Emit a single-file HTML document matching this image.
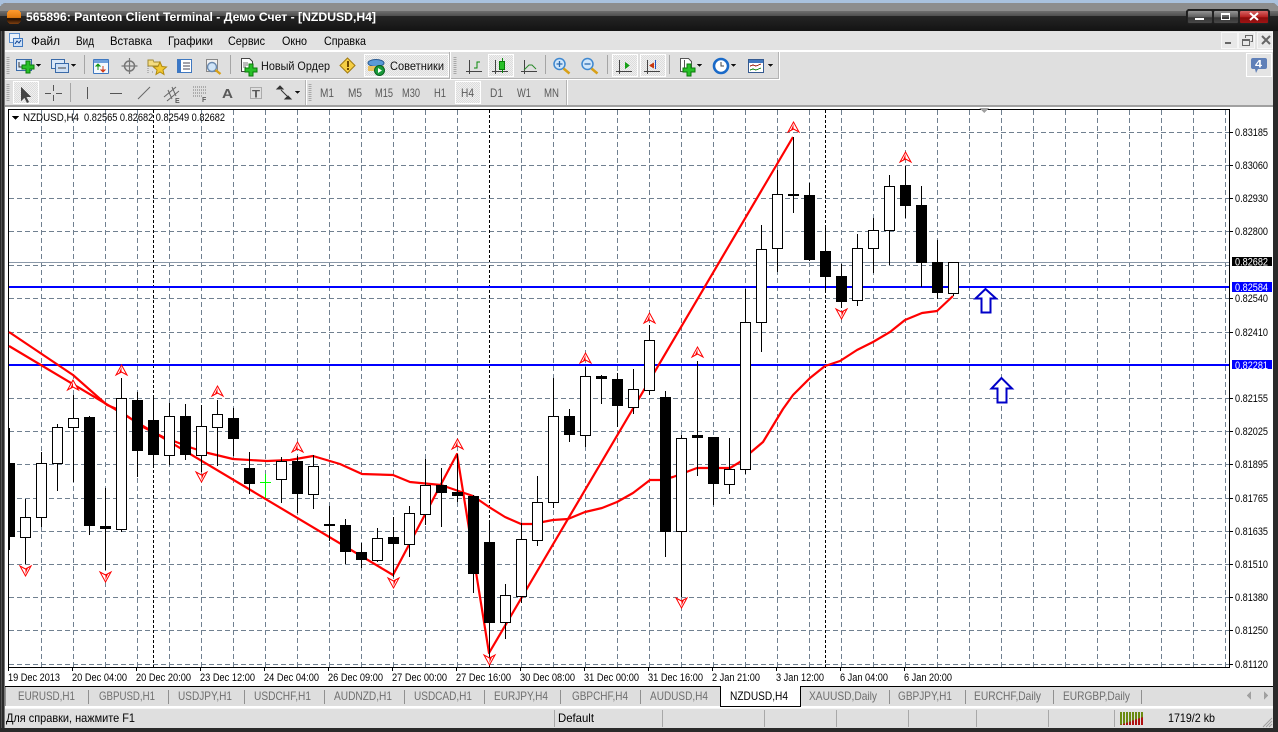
<!DOCTYPE html>
<html><head><meta charset="utf-8"><title>Panteon Client Terminal</title>
<style>
html,body{margin:0;padding:0;background:#a9c1dd;width:1278px;height:732px;overflow:hidden}
svg{display:block}
text{font-family:"Liberation Sans","Noto Sans CJK SC",sans-serif;font-size:12px}
.m{fill:#000}
.a{font-size:11px;fill:#000}
.d{font-size:11px;fill:#000}
.t{fill:#6e6e6e}
.f{fill:#5a5a5a}
</style></head><body>
<svg width="1278" height="732" viewBox="0 0 1278 732" xmlns="http://www.w3.org/2000/svg" shape-rendering="crispEdges">
<defs>
<linearGradient id="g1" x1="0" y1="0" x2="0" y2="1"><stop offset="0" stop-color="#8d8d8d"/><stop offset="1" stop-color="#4f4f4f"/></linearGradient>
<linearGradient id="g2" x1="0" y1="0" x2="0" y2="1"><stop offset="0" stop-color="#252525"/><stop offset="1" stop-color="#131313"/></linearGradient>
<linearGradient id="g3" x1="0" y1="0" x2="0" y2="1"><stop offset="0" stop-color="#ff9a2e"/><stop offset=".55" stop-color="#e07a10"/><stop offset=".6" stop-color="#1a0a00"/><stop offset="1" stop-color="#804010"/></linearGradient>
<linearGradient id="g4" x1="0" y1="0" x2="0" y2="1"><stop offset="0" stop-color="#9a9a9a"/><stop offset=".5" stop-color="#5e5e5e"/><stop offset=".55" stop-color="#353535"/><stop offset="1" stop-color="#4a4a4a"/></linearGradient>
<linearGradient id="g5" x1="0" y1="0" x2="0" y2="1"><stop offset="0" stop-color="#d86a6a"/><stop offset=".5" stop-color="#b82020"/><stop offset=".55" stop-color="#8a0c0c"/><stop offset="1" stop-color="#a01414"/></linearGradient>
<pattern id="h" width="2" height="2" patternUnits="userSpaceOnUse"><rect width="2" height="2" fill="#f0f0f0"/><rect width="1" height="1" fill="#dcdcdc"/><rect x="1" y="1" width="1" height="1" fill="#dcdcdc"/></pattern>
<g id="u" shape-rendering="geometricPrecision"><path d="M0-5L5.500 5 0 2-5.500 5Z" fill="#fff" stroke="#f00" stroke-width="1"/><path d="M0-3L-2.500 3 0 2z" fill="#f00"/></g>
<g id="v" shape-rendering="geometricPrecision"><path d="M0 5L5.500-5 0-2-5.500-5Z" fill="#fff" stroke="#f00" stroke-width="1"/><path d="M0 3L2.500-3 0-2z" fill="#f00"/></g>
<g id="plus"><path d="M-2-6h4v4h4v4h-4v4h-4v-4h-4v-4h4z" fill="#28c028" stroke="#0a7a0a" stroke-width="1"/></g>
</defs>

<!-- window -->
<rect width="1278" height="732" fill="#a9c1dd"/>
<rect y="3" width="1278" height="729" rx="6" fill="#262626"/>
<rect x="0" y="6" width="1278" height="10" fill="url(#g1)"/>
<path d="M0 9a6 6 0 0 1 6-6H1272a6 6 0 0 1 6 6v2H0z" fill="#8d8d8d" shape-rendering="geometricPrecision"/>
<rect y="16" width="1278" height="15" fill="url(#g2)"/>
<rect x="7" y="10" width="14" height="14" rx="4" fill="url(#g3)"/>
<text x="26" y="21" style="font-size:12px;font-weight:bold" fill="#fff" textLength="350" lengthAdjust="spacingAndGlyphs">565896: Panteon Client Terminal - Демо Счет - [NZDUSD,H4]</text>

<!-- caption buttons -->
<rect x="1186" y="9" width="84" height="16" rx="3" fill="#1c1c1c"/>
<rect x="1187.500" y="10.500" width="25" height="13" rx="2" fill="url(#g4)" stroke="#222"/>
<rect x="1213.500" y="10.500" width="25" height="13" rx="2" fill="url(#g4)" stroke="#222"/>
<rect x="1239.500" y="10.500" width="29" height="13" rx="2" fill="url(#g5)" stroke="#222"/>
<rect x="1195" y="18" width="9" height="2" fill="#fff"/>
<rect x="1221.500" y="13.500" width="8" height="6" fill="none" stroke="#fff" stroke-width="1"/><rect x="1221" y="13" width="9" height="2" fill="#fff"/>
<path d="M1250 13l8 7M1258 13l-8 7" stroke="#fff" stroke-width="2" shape-rendering="geometricPrecision"/>

<!-- left/right frame and client -->
<rect x="0" y="31" width="5" height="697" fill="#2a2a2a"/>
<rect x="1273" y="31" width="5" height="697" fill="#2a2a2a"/>
<rect x="1" y="31" width="1" height="697" fill="#555"/>
<rect x="4" y="31" width="1" height="697" fill="#777"/>
<rect x="5" y="31" width="1268" height="697" fill="#dfdfdf"/>

<!-- menu -->
<rect x="5" y="31" width="1268" height="19" fill="#e2e2e2"/>
<rect x="5" y="50" width="1268" height="2" fill="#fff"/>
<rect x="9.500" y="33.500" width="10" height="9" fill="#e8f0fa" stroke="#5a8fd0"/>
<rect x="13.500" y="38.500" width="9" height="8" fill="#cfe0f5" stroke="#3f78c0"/>
<path d="M15 44l2-3 2 2 2-3" stroke="#2a5aa0" fill="none"/>
<text class="m" x="31" y="45" textLength="29" lengthAdjust="spacingAndGlyphs">Файл</text>
<text class="m" x="76" y="45" textLength="18" lengthAdjust="spacingAndGlyphs">Вид</text>
<text class="m" x="110" y="45" textLength="42" lengthAdjust="spacingAndGlyphs">Вставка</text>
<text class="m" x="168" y="45" textLength="45" lengthAdjust="spacingAndGlyphs">Графики</text>
<text class="m" x="228" y="45" textLength="37" lengthAdjust="spacingAndGlyphs">Сервис</text>
<text class="m" x="282" y="45" textLength="25" lengthAdjust="spacingAndGlyphs">Окно</text>
<text class="m" x="324" y="45" textLength="42" lengthAdjust="spacingAndGlyphs">Справка</text>
<!-- mdi buttons -->
<rect x="1221.500" y="32.500" width="16" height="16" fill="#e8e8e8" stroke="#f6f6f6"/>
<rect x="1238.500" y="32.500" width="16" height="16" fill="#e8e8e8" stroke="#f6f6f6"/>
<rect x="1257.500" y="32.500" width="15" height="16" fill="#e8e8e8" stroke="#f6f6f6"/>
<rect x="1225" y="42" width="6" height="2" fill="#666"/>
<rect x="1242.500" y="39.500" width="7" height="6" fill="none" stroke="#666"/><rect x="1242" y="39" width="8" height="2" fill="#666"/><path d="M1245.500 38v-2.500h7v6h-2" fill="none" stroke="#666"/>
<path d="M1262 36l8 8M1270 36l-8 8" stroke="#666" stroke-width="2" shape-rendering="geometricPrecision"/>

<!-- toolbar frames -->
<rect x="5" y="78" width="774" height="1" fill="#b4b4b4"/>
<rect x="5" y="79" width="775" height="1" fill="#fff"/>
<rect x="778" y="52" width="1" height="27" fill="#b4b4b4"/>
<rect x="779" y="52" width="1" height="28" fill="#fff"/>
<rect x="449" y="52" width="1" height="27" fill="#b4b4b4"/><rect x="450" y="52" width="1" height="27" fill="#fff"/>
<rect x="566" y="80" width="1" height="26" fill="#b4b4b4"/><rect x="567" y="80" width="1" height="26" fill="#fff"/>
<rect x="305" y="80" width="1" height="26" fill="#b4b4b4"/><rect x="306" y="80" width="1" height="26" fill="#fff"/>
<rect x="5" y="105" width="1268" height="2" fill="#a0a0a0"/>
<path d="M8 57v18M455 57v18M8 84v18M310 84v18" stroke="#a8a8a8" stroke-width="3" stroke-dasharray="1 1" fill="none"/>
<path d="M84.500 55v19M230.500 55v19M545.500 55v19M607.500 55v19M669.500 55v19M70.500 83v19" stroke="#a5a5a5" fill="none"/>

<!-- hatched buttons -->
<rect x="364.500" y="54.500" width="84" height="22" fill="url(#h)" stroke="#fff"/>
<rect x="488.500" y="54.500" width="25" height="22" fill="url(#h)" stroke="#fff"/>
<rect x="612.500" y="54.500" width="25" height="22" fill="url(#h)" stroke="#fff"/>
<rect x="640.500" y="54.500" width="25" height="22" fill="url(#h)" stroke="#fff"/>
<rect x="13.500" y="81.500" width="25" height="22" fill="url(#h)" stroke="#fff"/>
<rect x="455.500" y="81.500" width="25" height="22" fill="url(#h)" stroke="#fff"/>
<rect x="1246.500" y="53.500" width="25" height="23" fill="#e4e4e4" stroke="#fff"/>

<!-- row 1 icons -->
<rect x="16.500" y="59.500" width="15" height="11" fill="#dbe8f8" stroke="#3a6aa8"/><path d="M19 62v5h6" stroke="#333" fill="none"/>
<use href="#plus" x="28" y="67"/>
<path d="M36 64h5l-2.500 3z" fill="#111"/>
<rect x="51.500" y="59.500" width="13" height="9" fill="#dbe8f8" stroke="#3a6aa8"/><rect x="55.500" y="63.500" width="13" height="9" fill="#cfe0f5" stroke="#3a6aa8"/><path d="M58 68h8" stroke="#444"/>
<path d="M71 64h5l-2.500 3z" fill="#111"/>
<rect x="93.500" y="59.500" width="15" height="14" rx="1" fill="#f4f8fd" stroke="#3f78c0"/><rect x="94" y="60" width="14" height="3" fill="#6ea0dc"/><path d="M98 70v-4m-2 0h4l-2-2z" stroke="#1a9a1a" fill="#1a9a1a"/><path d="M103 66v4m-2 0h4l-2 2z" stroke="#d04020" fill="#d04020"/>
<g shape-rendering="geometricPrecision" fill="none" stroke="#777"><circle cx="129.500" cy="66" r="5" stroke-width="1.500"/><path d="M129.500 58v16M121.500 66h16" stroke-width="1.200"/></g>
<path d="M148 60h5l1 2h6v4h-12z" fill="#f4dc80" stroke="#a08830"/><path d="M148 66v7M152 72h1" stroke="#888" stroke-dasharray="1 1"/>
<path d="M160 62l2 4.500 4.500.5-3.500 3 1 4.500-4-2.500-4 2.500 1-4.500-3.500-3 4.500-.5z" fill="#f2c832" stroke="#b08a10" shape-rendering="geometricPrecision"/>
<rect x="177.500" y="59.500" width="14" height="13" fill="#fff" stroke="#3f78c0"/><rect x="178" y="60" width="3" height="12" fill="#3a78c8"/><path d="M183 63h7M183 66h7M183 69h7" stroke="#445"/>
<rect x="206.500" y="59.500" width="11" height="12" fill="#f0f0f0" stroke="#888"/><g shape-rendering="geometricPrecision"><circle cx="212" cy="67" r="4.500" fill="#cfe4f8" stroke="#6a8ab0" stroke-width="1.400"/><path d="M215.500 70l5 4" stroke="#d8a018" stroke-width="2.400"/></g>
<path d="M241.500 58.500h8l3 3v10h-11z" fill="#fff" stroke="#444"/><path d="M243 63h5M243 65h5M243 67h3" stroke="#777"/><use href="#plus" x="251" y="70"/>
<text class="m" x="261" y="70" textLength="69" lengthAdjust="spacingAndGlyphs" style="fill:#111">Новый Ордер</text>
<path d="M347.500 58l7.500 7.500-7.500 7.500-7.500-7.500z" fill="#f6cf44" stroke="#a07a10" shape-rendering="geometricPrecision"/><rect x="347" y="61" width="2" height="6" fill="#704a00"/><rect x="347" y="68" width="2" height="2" fill="#704a00"/>
<g shape-rendering="geometricPrecision"><ellipse cx="376" cy="63" rx="8" ry="3.500" fill="#5a9ad8" stroke="#2a5a90"/><path d="M368 66h16v5h-16z" fill="#e8c060"/><circle cx="379.500" cy="70.500" r="5" fill="#1a9a3a" stroke="#0a6020"/><path d="M378 68v5l4-2.500z" fill="#fff"/></g>
<text class="m" x="390" y="70" textLength="54" lengthAdjust="spacingAndGlyphs" style="fill:#111">Советники</text>
<!-- chart toolbar icons -->
<g fill="none" stroke="#444"><path d="M469.500 60v14M466 71.500h16"/><path d="M474 68h3v-6h3" stroke="#0a8a0a"/></g>
<g fill="none" stroke="#444"><path d="M495.500 60v14M492 71.500h16"/><path d="M502.500 58v15" stroke="#0a8a0a"/></g><rect x="499.500" y="61.500" width="5" height="8" fill="#28c028" stroke="#0a7a0a"/>
<g fill="none" stroke="#444"><path d="M524.500 60v14M521 71.500h16"/><path d="M524 70l5-5 3 0 4 4" stroke="#2a8a2a" shape-rendering="geometricPrecision"/></g>
<g shape-rendering="geometricPrecision"><circle cx="559.500" cy="64" r="5.500" fill="#d0e6fa" stroke="#3f88d0" stroke-width="1.500"/><path d="M563.500 68.500l6 5" stroke="#d8a018" stroke-width="2.500"/><path d="M556.500 64h6M559.500 61v6" stroke="#2a6ab0" stroke-width="1.300"/>
<circle cx="587.500" cy="64" r="5.500" fill="#d0e6fa" stroke="#3f88d0" stroke-width="1.500"/><path d="M591.500 68.500l6 5" stroke="#d8a018" stroke-width="2.500"/><path d="M584.500 64h6" stroke="#2a6ab0" stroke-width="1.300"/></g>
<g fill="none" stroke="#444"><path d="M619.500 60v14M616 71.500h16M647.500 60v14M644 71.500h16"/><path d="M655.500 60v9" stroke="#2050c0"/></g>
<path d="M625 62v7l5-3.500z" fill="#18a018"/><path d="M649 65.500l5-3v6z" fill="#c83810"/>
<path d="M680.500 58.500h8l3 3v10h-11z" fill="#fff" stroke="#555"/><path d="M684.500 60v8m-2 0h6" stroke="#555" fill="none"/><use href="#plus" x="689" y="70"/>
<path d="M697 64h5l-2.500 3z" fill="#111"/>
<g shape-rendering="geometricPrecision"><circle cx="721" cy="66" r="7" fill="#fff" stroke="#1a6ac8" stroke-width="2.600"/><path d="M721 62v4h3" stroke="#444" fill="none"/></g>
<path d="M731 64h5l-2.500 3z" fill="#111"/>
<rect x="748.500" y="59.500" width="15" height="13" fill="#fff" stroke="#355a90"/><rect x="749" y="60" width="14" height="3" fill="#3f78c0"/><path d="M750 66l3-1 3 1 5-2" stroke="#a03020" fill="none"/><path d="M750 70l3-1 3 1 5-2" stroke="#209020" fill="none"/>
<path d="M768 64h5l-2.500 3z" fill="#111"/>
<!-- notification -->
<path d="M1251 60a2 2 0 0 1 2-2h12a2 2 0 0 1 2 2v7a2 2 0 0 1-2 2h-7l-2 4-1-4h-2a2 2 0 0 1-2-2z" fill="#6080b8" shape-rendering="geometricPrecision"/>
<text x="1255" y="67.500" fill="#fff" style="font-size:11px;font-weight:bold" textLength="7" lengthAdjust="spacingAndGlyphs">4</text>

<!-- row 2 icons -->
<path d="M21 87v14l3.500-3 2.500 5 2-1-2.500-5h4.500z" fill="#444"/>
<path d="M53.500 85v6M53.500 95v6M45 93.500h6M56 93.500h6" stroke="#555"/>
<path d="M87.500 87v12" stroke="#555"/>
<path d="M110 93.500h12" stroke="#555"/>
<path d="M138 99l12-12" stroke="#666" shape-rendering="geometricPrecision"/>
<path d="M164 97l12-10M167 101l12-10M168 90l4 9M172 87l4 9" stroke="#666" shape-rendering="geometricPrecision"/>
<text x="175" y="103" class="f" style="font-size:7px;font-weight:bold">E</text>
<path d="M193 87h13M193 90h13M193 93h13M193 96h9" stroke="#777" stroke-dasharray="1 1"/>
<text x="202" y="102" class="f" style="font-size:7px;font-weight:bold">F</text>
<text x="222" y="98" class="f" style="font-size:13px;font-weight:bold" textLength="11" lengthAdjust="spacingAndGlyphs">A</text>
<rect x="250.500" y="87.500" width="11" height="11" fill="none" stroke="#777" stroke-dasharray="1 1"/><text x="252" y="97.500" class="f" style="font-size:11px;font-weight:bold" textLength="8" lengthAdjust="spacingAndGlyphs">T</text>
<path d="M280 86l3 3h-6zM288 96l3 3h-6zM281 90l6 6" fill="#333" stroke="#333" shape-rendering="geometricPrecision"/>
<path d="M295 91h5l-2.500 3z" fill="#111"/>
<text class="f" x="320" y="97" textLength="14" lengthAdjust="spacingAndGlyphs">M1</text>
<text class="f" x="348" y="97" textLength="14" lengthAdjust="spacingAndGlyphs">M5</text>
<text class="f" x="375" y="97" textLength="18" lengthAdjust="spacingAndGlyphs">M15</text>
<text class="f" x="402" y="97" textLength="18" lengthAdjust="spacingAndGlyphs">M30</text>
<text class="f" x="434" y="97" textLength="12" lengthAdjust="spacingAndGlyphs">H1</text>
<text class="f" x="461" y="97" textLength="13" lengthAdjust="spacingAndGlyphs">H4</text>
<text class="f" x="490" y="97" textLength="13" lengthAdjust="spacingAndGlyphs">D1</text>
<text class="f" x="517" y="97" textLength="14" lengthAdjust="spacingAndGlyphs">W1</text>
<text class="f" x="544" y="97" textLength="15" lengthAdjust="spacingAndGlyphs">MN</text>

<!-- chart area -->
<rect x="5" y="107" width="1268" height="579" fill="#fff"/>
<rect x="8" y="109" width="1222" height="1" fill="#000"/>
<rect x="8" y="109" width="1" height="559" fill="#000"/>
<rect x="1229" y="109" width="1" height="559" fill="#000"/>
<rect x="8" y="667" width="1222" height="1" fill="#000"/>

<!-- grid -->
<g stroke="#708090" stroke-dasharray="5 3" fill="none">
<path d="M9 132.500H1229M9 165.500H1229M9 198.500H1229M9 231.500H1229M9 265.500H1229M9 298.500H1229M9 332.500H1229M9 365.500H1229M9 398.500H1229M9 431.500H1229M9 464.500H1229M9 498.500H1229M9 531.500H1229M9 564.500H1229M9 597.500H1229M9 630.500H1229M9 664.500H1229"/>
<path d="M41.500 110V667M73.500 110V667M105.500 110V667M137.500 110V667M169.500 110V667M201.500 110V667M233.500 110V667M265.500 110V667M297.500 110V667M329.500 110V667M361.500 110V667M393.500 110V667M425.500 110V667M457.500 110V667M521.500 110V667M553.500 110V667M585.500 110V667M617.500 110V667M649.500 110V667M681.500 110V667M713.500 110V667M745.500 110V667M777.500 110V667M809.500 110V667M841.500 110V667M873.500 110V667M905.500 110V667M937.500 110V667M969.500 110V667M1001.500 110V667M1033.500 110V667M1065.500 110V667M1097.500 110V667M1129.500 110V667M1161.500 110V667M1193.500 110V667M1225.500 110V667"/>
</g>
<path d="M153.500 110V667M489.500 110V667M825.500 110V667" stroke="#000" stroke-dasharray="3 2" fill="none"/>
<!-- level lines -->
<rect x="9" y="262" width="1220" height="1" fill="#8a98a8"/>
<rect x="9" y="286" width="1220" height="2" fill="#0000ff"/>
<rect x="9" y="364" width="1220" height="2" fill="#0000ff"/>
<path d="M979 108h10l-5 5z" fill="#a0a0a0"/>

<!-- red lines -->
<g fill="none" stroke="#f00" stroke-width="2.200" stroke-linejoin="round" shape-rendering="geometricPrecision">
<path d="M9 332L73 375 107 405 117 409 143 427 163 437 192 448 208 453 233 459 267 461 290 460 313 456 340 464 362 474 393 475 410 482 441 485 473 496 489 507 505 517 521 524 532 524 553 520 568 519 585 512 602 508 617 502 633 493 650 480 660 480 673 477 697 468 730 468 740 462 750 453 763 442 783 409 793 395 810 378 825 366 840 361 857 350 873 342 890 332 905 320 922 313 937 311 953 296"/>
<path d="M9 346L393 575 457 454 489 653 793 137"/>
</g>

<!-- wicks -->
<path stroke="#000" fill="none" d="M9.500 428V550M25.500 499V564M41.500 452V527M57.500 424V491M73.500 395V482M89.500 416V535M105.500 488V570M121.500 378V532M137.500 392V477M153.500 397V466M169.500 403V465M185.500 404V460M201.500 405V472M217.500 400V466M233.500 408V456M249.500 452V494M281.500 457V503M297.500 456V513M313.500 455V509M329.500 506V541M345.500 519V564M361.500 543V568M377.500 528V562M393.500 517V577M409.500 506V557M425.500 459V525M441.500 468V527M457.500 454V502M473.500 495V593M489.500 523V663M505.500 584V639M521.500 523V603M537.500 476V546M553.500 378V508M569.500 409V442M585.500 367V447M601.500 375V404M617.500 373V427M633.500 369V414M649.500 325V395M665.500 391V557M681.500 435V597M697.500 361V476M713.500 437V505M729.500 438V494M745.500 289V474M761.500 225V352M777.500 170V272M793.500 137V213M809.500 183V261M825.500 228V292M841.500 264V308M857.500 234V306M873.500 218V273M889.500 175V265M905.500 166V218M921.500 186V287M937.500 240V299M953.500 262V296"/>
<!-- green doji -->
<path d="M265.500 474V498M260 482.500H271" stroke="#00ff00" fill="none"/>
<!-- black bodies -->
<path fill="#000" d="M9 463h6v74h-6zM84 417h11v109h-11zM100 526h11v3h-11zM132 400h11v51h-11zM148 420h11v35h-11zM180 416h11v39h-11zM228 418h11v21h-11zM244 468h11v16h-11zM292 461h11v33h-11zM324 524h11v2h-11zM340 525h11v27h-11zM356 552h11v8h-11zM388 537h11v7h-11zM436 485h11v8h-11zM452 492h11v4h-11zM468 496h11v78h-11zM484 542h11v81h-11zM564 416h11v19h-11zM596 376h11v3h-11zM612 379h11v27h-11zM660 397h11v135h-11zM692 435h11v3h-11zM708 437h11v47h-11zM788 194h11v2h-11zM804 195h11v65h-11zM820 251h11v26h-11zM836 276h11v26h-11zM900 185h11v21h-11zM916 205h11v58h-11zM932 262h11v31h-11z"/>
<!-- white bodies -->
<path fill="#fff" stroke="#000" d="M20.500 517.500h10v20h-10zM36.500 463.500h10v54h-10zM52.500 427.500h10v36h-10zM68.500 418.500h10v9h-10zM116.500 398.500h10v131h-10zM164.500 416.500h10v39h-10zM196.500 426.500h10v29h-10zM212.500 414.500h10v13h-10zM276.500 461.500h10v18h-10zM308.500 466.500h10v28h-10zM372.500 538.500h10v22h-10zM404.500 513.500h10v31h-10zM420.500 485.500h10v29h-10zM500.500 595.500h10v27h-10zM516.500 539.500h10v57h-10zM532.500 502.500h10v38h-10zM548.500 416.500h10v86h-10zM580.500 376.500h10v59h-10zM628.500 389.500h10v18h-10zM644.500 340.500h10v50h-10zM676.500 438.500h10v93h-10zM724.500 469.500h10v15h-10zM740.500 322.500h10v147h-10zM756.500 249.500h10v73h-10zM772.500 194.500h10v54h-10zM852.500 248.500h10v52h-10zM868.500 230.500h10v18h-10zM884.500 186.500h10v44h-10zM948.500 262.500h10v31h-10z"/>

<!-- markers -->
<use href="#u" x="121.500" y="370"/><use href="#u" x="73" y="385"/><use href="#u" x="217.500" y="391"/><use href="#u" x="297.500" y="447"/><use href="#u" x="457.500" y="444"/><use href="#u" x="585.500" y="358"/><use href="#u" x="649.500" y="318"/><use href="#u" x="697.500" y="352"/><use href="#u" x="793.500" y="127"/><use href="#u" x="905.500" y="157"/>
<use href="#v" x="25.500" y="571"/><use href="#v" x="105.500" y="577"/><use href="#v" x="201.500" y="477"/><use href="#v" x="393.500" y="583"/><use href="#v" x="489.500" y="660"/><use href="#v" x="681.500" y="603"/><use href="#v" x="841.500" y="314"/>

<!-- blue arrows -->
<path d="M985.500 289L975.500 298.500H981.500V312.500H990.500V298.500H996Z" fill="#fff" stroke="#0000c8" stroke-width="2" shape-rendering="geometricPrecision"/>
<path d="M1001.500 378L991.500 388.500H997.500V402.500H1006.500V388.500H1012Z" fill="#fff" stroke="#0000c8" stroke-width="2" shape-rendering="geometricPrecision"/>

<!-- chart header -->
<path d="M12 116h7l-3.500 4z" fill="#000"/>
<text class="d" x="23" y="121" textLength="56" lengthAdjust="spacingAndGlyphs">NZDUSD,H4</text>
<text class="d" x="84" y="121" textLength="141" lengthAdjust="spacingAndGlyphs">0.82565 0.82682 0.82549 0.82682</text>

<!-- right axis -->
<path d="M1230 132.500h3M1230 165.500h3M1230 198.500h3M1230 231.500h3M1230 298.500h3M1230 332.500h3M1230 398.500h3M1230 431.500h3M1230 464.500h3M1230 498.500h3M1230 531.500h3M1230 564.500h3M1230 597.500h3M1230 630.500h3M1230 664.500h3" stroke="#000"/>
<text class="a" x="1235" y="136" textLength="33" lengthAdjust="spacingAndGlyphs">0.83185</text>
<text class="a" x="1235" y="169" textLength="33" lengthAdjust="spacingAndGlyphs">0.83060</text>
<text class="a" x="1235" y="202" textLength="33" lengthAdjust="spacingAndGlyphs">0.82930</text>
<text class="a" x="1235" y="235" textLength="33" lengthAdjust="spacingAndGlyphs">0.82800</text>
<text class="a" x="1235" y="302" textLength="33" lengthAdjust="spacingAndGlyphs">0.82540</text>
<text class="a" x="1235" y="336" textLength="33" lengthAdjust="spacingAndGlyphs">0.82410</text>
<text class="a" x="1235" y="402" textLength="33" lengthAdjust="spacingAndGlyphs">0.82155</text>
<text class="a" x="1235" y="435" textLength="33" lengthAdjust="spacingAndGlyphs">0.82025</text>
<text class="a" x="1235" y="468" textLength="33" lengthAdjust="spacingAndGlyphs">0.81895</text>
<text class="a" x="1235" y="502" textLength="33" lengthAdjust="spacingAndGlyphs">0.81765</text>
<text class="a" x="1235" y="535" textLength="33" lengthAdjust="spacingAndGlyphs">0.81635</text>
<text class="a" x="1235" y="568" textLength="33" lengthAdjust="spacingAndGlyphs">0.81510</text>
<text class="a" x="1235" y="601" textLength="33" lengthAdjust="spacingAndGlyphs">0.81380</text>
<text class="a" x="1235" y="634" textLength="33" lengthAdjust="spacingAndGlyphs">0.81250</text>
<text class="a" x="1235" y="668" textLength="33" lengthAdjust="spacingAndGlyphs">0.81120</text>
<rect x="1232" y="257" width="40" height="9" fill="#000"/><text x="1235" y="265.500" style="font-size:11px" fill="#fff" textLength="33" lengthAdjust="spacingAndGlyphs">0.82682</text>
<rect x="1232" y="282" width="40" height="10" fill="#0000ff"/><text x="1235" y="291" style="font-size:11px" fill="#fff" textLength="33" lengthAdjust="spacingAndGlyphs">0.82584</text>
<rect x="1232" y="360" width="40" height="9" fill="#0000ff"/><text x="1235" y="369" style="font-size:11px" fill="#fff" textLength="33" lengthAdjust="spacingAndGlyphs">0.82281</text>

<!-- bottom axis -->
<path d="M72.500 668v3M136.500 668v3M200.500 668v3M264.500 668v3M328.500 668v3M392.500 668v3M456.500 668v3M520.500 668v3M584.500 668v3M648.500 668v3M712.500 668v3M776.500 668v3M840.500 668v3M904.500 668v3M8.500 668v3" stroke="#000"/>
<text class="d" x="8" y="681" textLength="52" lengthAdjust="spacingAndGlyphs">19 Dec 2013</text>
<text class="d" x="72" y="681" textLength="55" lengthAdjust="spacingAndGlyphs">20 Dec 04:00</text>
<text class="d" x="136" y="681" textLength="55" lengthAdjust="spacingAndGlyphs">20 Dec 20:00</text>
<text class="d" x="200" y="681" textLength="55" lengthAdjust="spacingAndGlyphs">23 Dec 12:00</text>
<text class="d" x="264" y="681" textLength="55" lengthAdjust="spacingAndGlyphs">24 Dec 04:00</text>
<text class="d" x="328" y="681" textLength="55" lengthAdjust="spacingAndGlyphs">26 Dec 09:00</text>
<text class="d" x="392" y="681" textLength="55" lengthAdjust="spacingAndGlyphs">27 Dec 00:00</text>
<text class="d" x="456" y="681" textLength="55" lengthAdjust="spacingAndGlyphs">27 Dec 16:00</text>
<text class="d" x="520" y="681" textLength="55" lengthAdjust="spacingAndGlyphs">30 Dec 08:00</text>
<text class="d" x="584" y="681" textLength="55" lengthAdjust="spacingAndGlyphs">31 Dec 00:00</text>
<text class="d" x="648" y="681" textLength="55" lengthAdjust="spacingAndGlyphs">31 Dec 16:00</text>
<text class="d" x="712" y="681" textLength="48" lengthAdjust="spacingAndGlyphs">2 Jan 21:00</text>
<text class="d" x="776" y="681" textLength="48" lengthAdjust="spacingAndGlyphs">3 Jan 12:00</text>
<text class="d" x="840" y="681" textLength="48" lengthAdjust="spacingAndGlyphs">6 Jan 04:00</text>
<text class="d" x="904" y="681" textLength="48" lengthAdjust="spacingAndGlyphs">6 Jan 20:00</text>

<!-- tabs -->
<rect x="5" y="686" width="1268" height="1" fill="#000"/>
<rect x="5" y="687" width="1268" height="20" fill="#dedede"/>
<rect x="5" y="706" width="1268" height="2" fill="#fff"/>
<path d="M5.500 687v19M88.500 690v14M168.500 690v14M244.500 690v14M324.500 690v14M404.500 690v14M484.500 690v14M560.500 690v14M640.500 690v14M889.500 690v14M965.500 690v14M1053.500 690v14M1141.500 690v14" stroke="#909090" fill="none"/>
<rect x="720.500" y="686" width="80" height="20" fill="#fff"/>
<path d="M720.500 686v20.500h80V686" fill="none" stroke="#000"/>
<text class="t" x="18" y="700" textLength="57" lengthAdjust="spacingAndGlyphs">EURUSD,H1</text>
<text class="t" x="99" y="700" textLength="56" lengthAdjust="spacingAndGlyphs">GBPUSD,H1</text>
<text class="t" x="178" y="700" textLength="54" lengthAdjust="spacingAndGlyphs">USDJPY,H1</text>
<text class="t" x="254" y="700" textLength="57" lengthAdjust="spacingAndGlyphs">USDCHF,H1</text>
<text class="t" x="334" y="700" textLength="58" lengthAdjust="spacingAndGlyphs">AUDNZD,H1</text>
<text class="t" x="414" y="700" textLength="58" lengthAdjust="spacingAndGlyphs">USDCAD,H1</text>
<text class="t" x="494" y="700" textLength="54" lengthAdjust="spacingAndGlyphs">EURJPY,H4</text>
<text class="t" x="572" y="700" textLength="56" lengthAdjust="spacingAndGlyphs">GBPCHF,H4</text>
<text class="t" x="650" y="700" textLength="58" lengthAdjust="spacingAndGlyphs">AUDUSD,H4</text>
<text x="730" y="700" fill="#000" textLength="58" lengthAdjust="spacingAndGlyphs">NZDUSD,H4</text>
<text class="t" x="809" y="700" textLength="68" lengthAdjust="spacingAndGlyphs">XAUUSD,Daily</text>
<text class="t" x="898" y="700" textLength="54" lengthAdjust="spacingAndGlyphs">GBPJPY,H1</text>
<text class="t" x="974" y="700" textLength="67" lengthAdjust="spacingAndGlyphs">EURCHF,Daily</text>
<text class="t" x="1063" y="700" textLength="67" lengthAdjust="spacingAndGlyphs">EURGBP,Daily</text>
<path d="M1251 691v9l-4-4.500zM1264 691v9l4-4.500z" fill="#a0a0a0"/>

<!-- status bar -->
<rect x="5" y="708" width="1268" height="20" fill="#dfdfdf"/>
<rect x="5" y="708" width="1268" height="1" fill="#f4f4f4"/>
<path d="M554.500 710v17M662.500 710v17M764.500 710v17M836.500 710v17M908.500 710v17M976.500 710v17M1048.500 710v17M1114.500 710v17" stroke="#a8a8a8" fill="none"/>
<text x="6" y="722" fill="#000" textLength="129" lengthAdjust="spacingAndGlyphs">Для справки, нажмите F1</text>
<text x="558" y="722" fill="#000" textLength="36" lengthAdjust="spacingAndGlyphs">Default</text>
<path d="M1120 712h23v5l-23 8z" fill="#6a8a10"/>
<path d="M1120 725l23-8v8z" fill="#b01010"/>
<path d="M1122.500 712v13M1125.500 712v13M1128.500 712v13M1131.500 712v13M1134.500 712v13M1137.500 712v13M1140.500 712v13" stroke="#dfdfdf"/>
<text x="1168" y="722" fill="#000" textLength="47" lengthAdjust="spacingAndGlyphs">1719/2 kb</text>
<path d="M1263 727l9-9M1266 727l6-6M1269 727l3-3" stroke="#a0a0a0" shape-rendering="geometricPrecision"/>

<!-- bottom frame -->
<rect x="0" y="728" width="1278" height="4" fill="#2a2a2a"/>
</svg>
</body></html>
